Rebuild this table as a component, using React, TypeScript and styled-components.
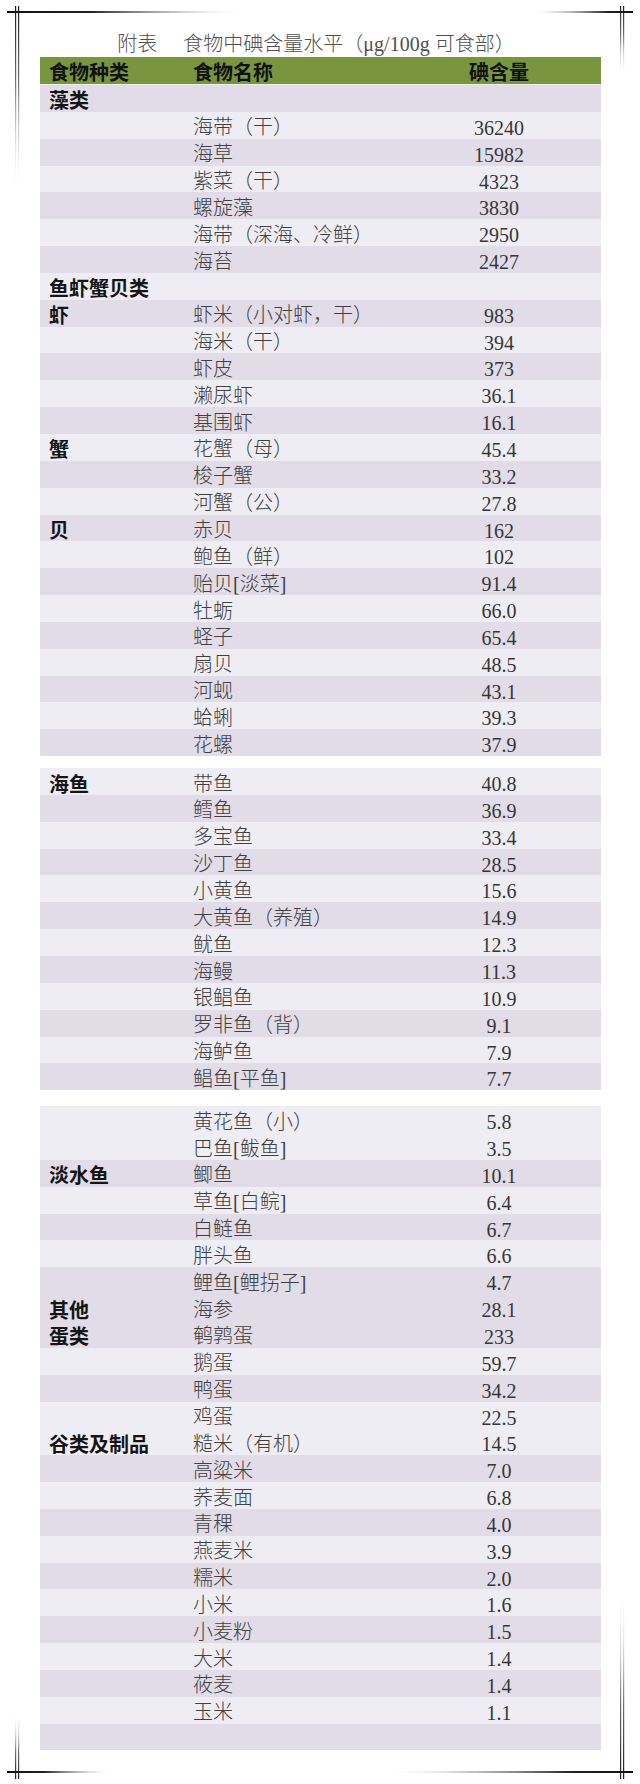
import React from 'react';
import styled, { createGlobalStyle, css } from 'styled-components';

const Global = createGlobalStyle`
  html, body { margin: 0; padding: 0; background: #ffffff; }
  body { width: 640px; }
`;

type Shade = 'd' | 'l';
interface RowData { cat?: string; name?: string; value?: string; shade: Shade; }

const block1: RowData[] = [
  { cat: '藻类', shade: 'd' },
  { name: '海带（干）', value: '36240', shade: 'l' },
  { name: '海草', value: '15982', shade: 'd' },
  { name: '紫菜（干）', value: '4323', shade: 'l' },
  { name: '螺旋藻', value: '3830', shade: 'd' },
  { name: '海带（深海、冷鲜）', value: '2950', shade: 'l' },
  { name: '海苔', value: '2427', shade: 'd' },
  { cat: '鱼虾蟹贝类', shade: 'l' },
  { cat: '虾', name: '虾米（小对虾，干）', value: '983', shade: 'd' },
  { name: '海米（干）', value: '394', shade: 'l' },
  { name: '虾皮', value: '373', shade: 'd' },
  { name: '濑尿虾', value: '36.1', shade: 'l' },
  { name: '基围虾', value: '16.1', shade: 'd' },
  { cat: '蟹', name: '花蟹（母）', value: '45.4', shade: 'l' },
  { name: '梭子蟹', value: '33.2', shade: 'd' },
  { name: '河蟹（公）', value: '27.8', shade: 'l' },
  { cat: '贝', name: '赤贝', value: '162', shade: 'd' },
  { name: '鲍鱼（鲜）', value: '102', shade: 'l' },
  { name: '贻贝[淡菜]', value: '91.4', shade: 'd' },
  { name: '牡蛎', value: '66.0', shade: 'l' },
  { name: '蛏子', value: '65.4', shade: 'd' },
  { name: '扇贝', value: '48.5', shade: 'l' },
  { name: '河蚬', value: '43.1', shade: 'd' },
  { name: '蛤蜊', value: '39.3', shade: 'l' },
  { name: '花螺', value: '37.9', shade: 'd' },
];

const block2: RowData[] = [
  { cat: '海鱼', name: '带鱼', value: '40.8', shade: 'l' },
  { name: '鳕鱼', value: '36.9', shade: 'd' },
  { name: '多宝鱼', value: '33.4', shade: 'l' },
  { name: '沙丁鱼', value: '28.5', shade: 'd' },
  { name: '小黄鱼', value: '15.6', shade: 'l' },
  { name: '大黄鱼（养殖）', value: '14.9', shade: 'd' },
  { name: '鱿鱼', value: '12.3', shade: 'l' },
  { name: '海鳗', value: '11.3', shade: 'd' },
  { name: '银鲳鱼', value: '10.9', shade: 'l' },
  { name: '罗非鱼（背）', value: '9.1', shade: 'd' },
  { name: '海鲈鱼', value: '7.9', shade: 'l' },
  { name: '鲳鱼[平鱼]', value: '7.7', shade: 'd' },
];

const block3: RowData[] = [
  { name: '黄花鱼（小）', value: '5.8', shade: 'l' },
  { name: '巴鱼[鲅鱼]', value: '3.5', shade: 'l' },
  { cat: '淡水鱼', name: '鲫鱼', value: '10.1', shade: 'd' },
  { name: '草鱼[白鲩]', value: '6.4', shade: 'l' },
  { name: '白鲢鱼', value: '6.7', shade: 'd' },
  { name: '胖头鱼', value: '6.6', shade: 'l' },
  { name: '鲤鱼[鲤拐子]', value: '4.7', shade: 'd' },
  { cat: '其他', name: '海参', value: '28.1', shade: 'd' },
  { cat: '蛋类', name: '鹌鹑蛋', value: '233', shade: 'd' },
  { name: '鹅蛋', value: '59.7', shade: 'l' },
  { name: '鸭蛋', value: '34.2', shade: 'd' },
  { name: '鸡蛋', value: '22.5', shade: 'l' },
  { cat: '谷类及制品', name: '糙米（有机）', value: '14.5', shade: 'l' },
  { name: '高粱米', value: '7.0', shade: 'd' },
  { name: '荞麦面', value: '6.8', shade: 'l' },
  { name: '青稞', value: '4.0', shade: 'd' },
  { name: '燕麦米', value: '3.9', shade: 'l' },
  { name: '糯米', value: '2.0', shade: 'd' },
  { name: '小米', value: '1.6', shade: 'l' },
  { name: '小麦粉', value: '1.5', shade: 'd' },
  { name: '大米', value: '1.4', shade: 'l' },
  { name: '莜麦', value: '1.4', shade: 'd' },
  { name: '玉米', value: '1.1', shade: 'l' },
  { shade: 'd' },
];

const Page = styled.div`
  position: relative;
  width: 640px;
  height: 1784px;
  box-sizing: border-box;
  padding: 32px 39px 0 40px;
  background: #ffffff;
  font-family: "Liberation Serif", "Noto Sans CJK SC", serif;
  overflow: hidden;
`;

const Title = styled.div`
  height: 25px;
  line-height: 24px;
  text-align: center;
  padding-right: 9px;
  font-size: 20px;
  font-weight: 300;
  color: #505050;
  white-space: nowrap;
`;

const TitleLead = styled.span`
  margin-right: 26px;
`;

const gridCols = css`
  display: grid;
  grid-template-columns: 153px 1fr 118px;
  padding-right: 43px;
  align-items: center;
`;

const Header = styled.div`
  ${gridCols};
  height: 28px;
  background: #79953d;
  border-bottom: 1px solid #eef0e6;
  box-sizing: border-box;
  font-family: "Noto Sans CJK SC", sans-serif;
  font-weight: 700;
  font-size: 20px;
  color: #111;
  line-height: 26px;
`;

const HeadCell = styled.div<{ $center?: boolean; $pad?: boolean }>`
  padding-left: ${(p) => (p.$pad ? '9px' : '0')};
  text-align: ${(p) => (p.$center ? 'center' : 'left')};
  padding-top: 2px;
`;

const Block = styled.div<{ $gap: number }>`
  display: flex;
  flex-direction: column;
  margin-top: ${(p) => p.$gap}px;
`;

const Row = styled.div<{ $shade: Shade }>`
  ${gridCols};
  height: 26.85px;
  background: ${(p) => (p.$shade === 'd' ? '#e1dce8' : '#efedf4')};
  line-height: 26px;
`;

const Cat = styled.div`
  padding-left: 9px;
  padding-top: 2px;
  font-family: "Noto Sans CJK SC", sans-serif;
  font-weight: 700;
  font-size: 20px;
  color: #151515;
  white-space: nowrap;
`;

const Name = styled.div`
  padding-top: 2px;
  font-size: 20px;
  font-weight: 300;
  color: #404040;
  white-space: nowrap;
`;

const Value = styled.div`
  padding-top: 3px;
  text-align: center;
  font-family: "Liberation Serif", serif;
  font-size: 20px;
  color: #363636;
`;

const FrameArt = styled.svg`
  position: absolute;
  inset: 0;
  width: 640px;
  height: 1784px;
  pointer-events: none;
`;

const TableRows: React.FC<{ rows: RowData[]; gap: number }> = ({ rows, gap }) => (
  <Block $gap={gap}>
    {rows.map((r, i) => (
      <Row key={i} $shade={r.shade}>
        <Cat>{r.cat ?? ''}</Cat>
        <Name>{r.name ?? ''}</Name>
        <Value>{r.value ?? ''}</Value>
      </Row>
    ))}
  </Block>
);

const DoubleV: React.FC<{ x: number; y: number; h: number; fill: string }> = ({ x, y, h, fill }) => (
  <g fill={fill}>
    <rect x={x} y={y} width={1.2} height={h} />
    <rect x={x + 3} y={y} width={1.2} height={h} />
  </g>
);

const Frame: React.FC = () => (
  <FrameArt viewBox="0 0 640 1784" aria-hidden="true">
    <defs>
      <linearGradient id="fadeR" x1="0" y1="0" x2="1" y2="0">
        <stop offset="0" stopColor="#111" />
        <stop offset="0.35" stopColor="#222" />
        <stop offset="0.7" stopColor="#888" stopOpacity="0.5" />
        <stop offset="1" stopColor="#fff" stopOpacity="0" />
      </linearGradient>
      <linearGradient id="fadeL" x1="1" y1="0" x2="0" y2="0">
        <stop offset="0" stopColor="#111" />
        <stop offset="0.25" stopColor="#222" />
        <stop offset="0.65" stopColor="#888" stopOpacity="0.5" />
        <stop offset="1" stopColor="#fff" stopOpacity="0" />
      </linearGradient>
      <linearGradient id="fadeDown" x1="0" y1="0" x2="0" y2="1">
        <stop offset="0" stopColor="#1a1a1a" />
        <stop offset="0.4" stopColor="#333" stopOpacity="0.7" />
        <stop offset="1" stopColor="#fff" stopOpacity="0" />
      </linearGradient>
      <linearGradient id="fadeUp" x1="0" y1="1" x2="0" y2="0">
        <stop offset="0" stopColor="#1a1a1a" />
        <stop offset="0.4" stopColor="#333" stopOpacity="0.7" />
        <stop offset="1" stopColor="#fff" stopOpacity="0" />
      </linearGradient>
    </defs>
    <rect x={7} y={11} width={240} height={2} fill="url(#fadeR)" />
    <rect x={530} y={11} width={103} height={2} fill="url(#fadeL)" />
    <DoubleV x={15} y={6} h={190} fill="url(#fadeDown)" />
    <DoubleV x={620} y={6} h={72} fill="url(#fadeDown)" />
    <rect x={7} y={1771} width={106} height={2} fill="url(#fadeR)" />
    <rect x={384} y={1771} width={249} height={2} fill="url(#fadeL)" />
    <DoubleV x={15} y={1712} h={67} fill="url(#fadeUp)" />
    <DoubleV x={620} y={1590} h={189} fill="url(#fadeUp)" />
  </FrameArt>
);

export default function App() {
  return (
    <>
      <Global />
      <Page>
        <Title>
          <TitleLead>附表</TitleLead>食物中碘含量水平（μg/100g 可食部）
        </Title>
        <Header>
          <HeadCell $pad>食物种类</HeadCell>
          <HeadCell>食物名称</HeadCell>
          <HeadCell $center>碘含量</HeadCell>
        </Header>
        <TableRows rows={block1} gap={0} />
        <TableRows rows={block2} gap={12} />
        <TableRows rows={block3} gap={16} />
        <Frame />
      </Page>
    </>
  );
}
